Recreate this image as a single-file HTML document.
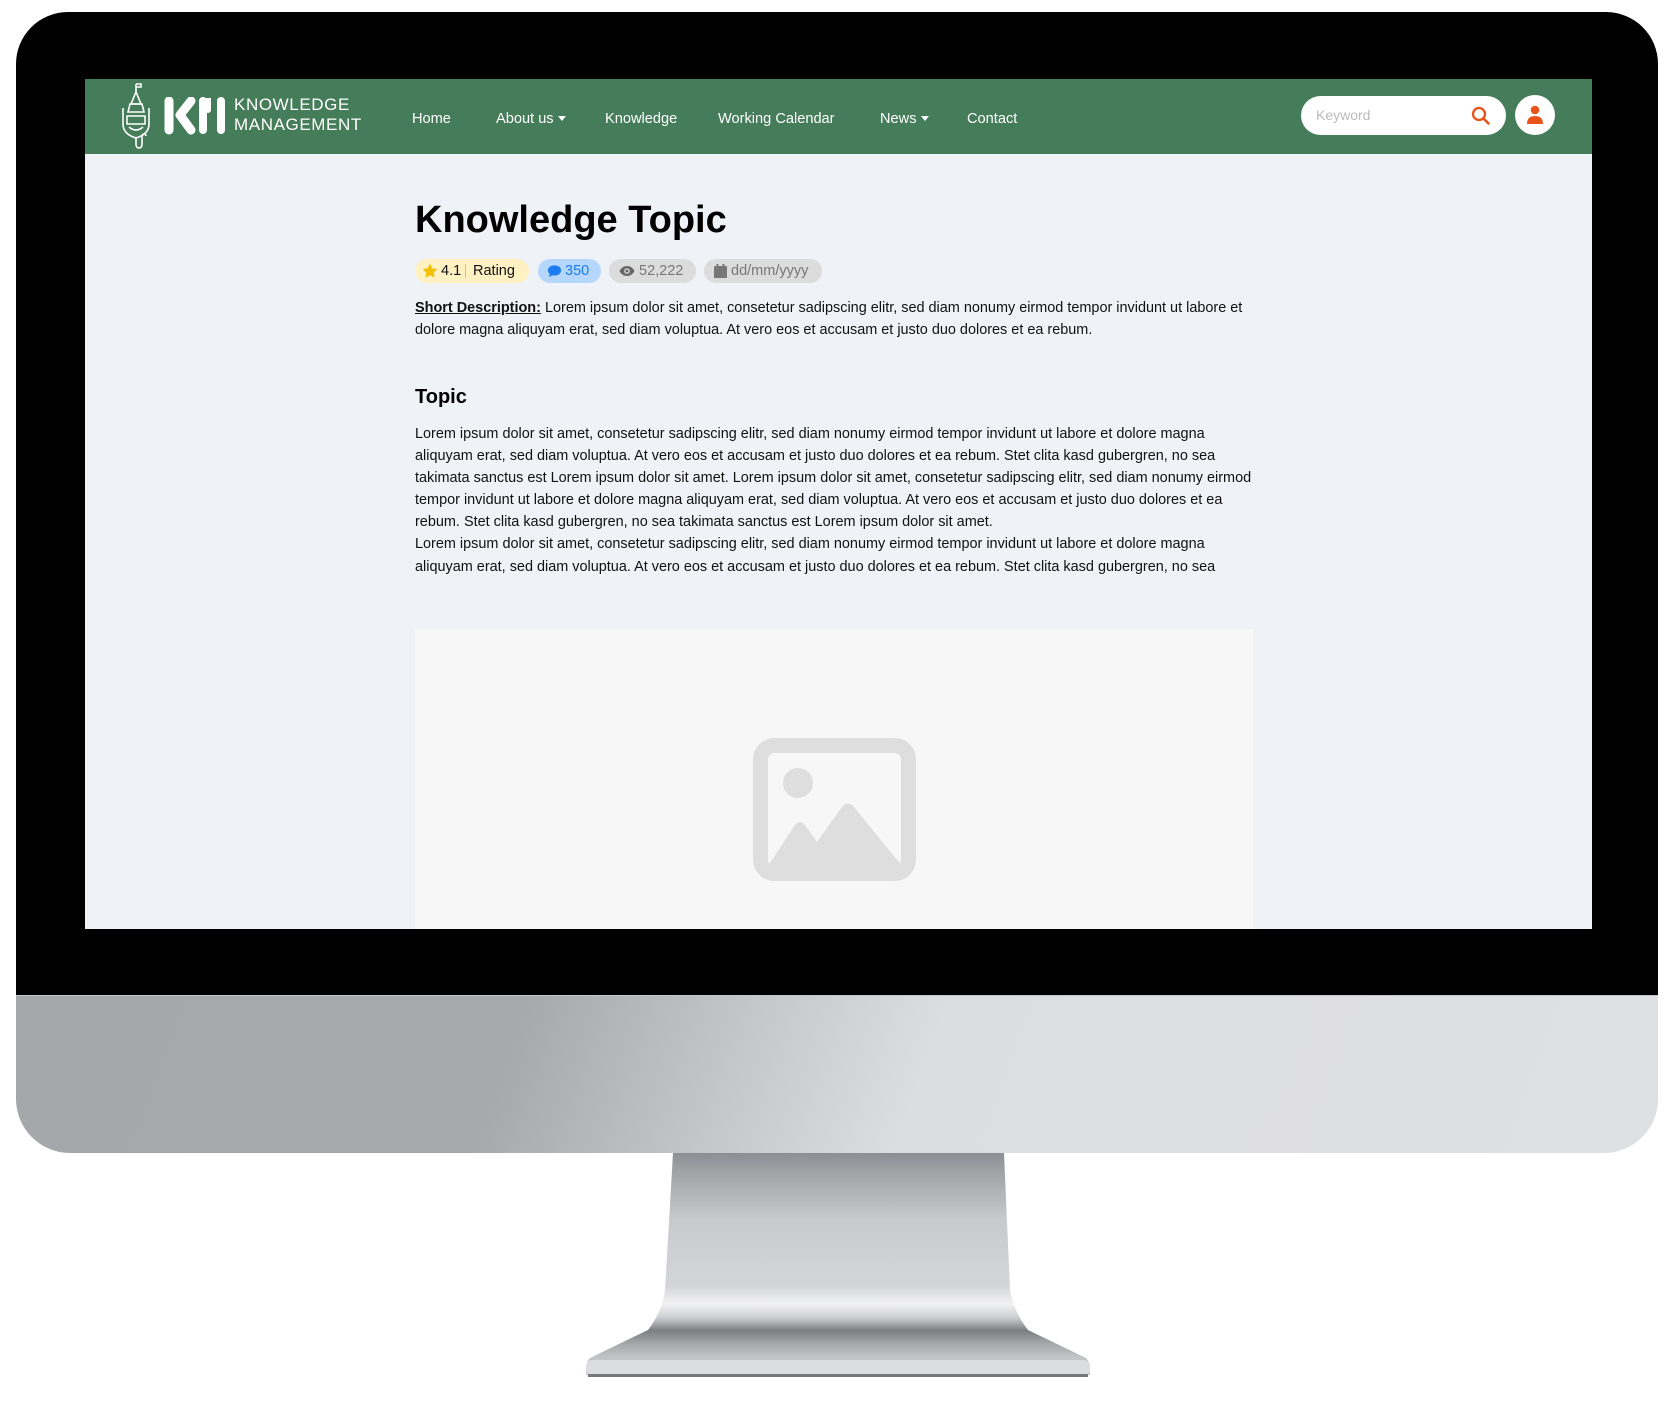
<!DOCTYPE html>
<html><head><meta charset="utf-8"><style>
*{margin:0;padding:0;box-sizing:border-box}
html,body{width:1670px;height:1402px;background:#fff;overflow:hidden;font-family:"Liberation Sans",Arial,sans-serif}
.abs{position:absolute}
#bezel{left:16px;top:12px;width:1642px;height:983px;background:#000;border-radius:52px 52px 0 0}
#chin{left:16px;top:995px;width:1642px;height:158px;border-radius:0 0 54px 54px;
background:linear-gradient(110deg,#a6a7ab 0%,#a7a8ac 30%,#c8c9cd 45%,#dcdde0 55%,#dfe0e2 100%);border-top:1px solid #c8c8cc}
#screen{left:85px;top:79px;width:1507px;height:850px;background:#eff2f7;overflow:hidden}
#nav{left:0;top:0;width:1507px;height:75px;background:#457c59}
.ni{position:absolute;top:31px;color:#fff;font-size:14.6px;white-space:nowrap;line-height:18px}
.car{display:inline-block;width:0;height:0;border-left:4px solid transparent;border-right:4px solid transparent;border-top:5px solid #fff;margin-left:4px;vertical-align:2px}
#search{left:1216px;top:17px;width:205px;height:39px;background:#fff;border-radius:20px}
#user{left:1430px;top:16px;width:40px;height:40px;background:#fff;border-radius:50%}
.t{position:absolute;white-space:nowrap;color:#111}
.badge{position:absolute;top:180px;height:24px;border-radius:12px;font-size:14.5px;line-height:24px;white-space:nowrap}
.p{font-size:14.45px;line-height:22.1px;left:330px}
</style></head><body>
<div id="bezel" class="abs"></div>
<div id="chin" class="abs"></div>
<svg class="abs" style="left:0;top:0" width="1670" height="1402">
<defs>
<linearGradient id="st" x1="0" y1="0" x2="0" y2="1">
<stop offset="0" stop-color="#8d8e93"/><stop offset="0.08" stop-color="#a0a1a5"/><stop offset="0.3" stop-color="#c9cacd"/><stop offset="0.6" stop-color="#d4d5d8"/><stop offset="0.68" stop-color="#f2f2f3"/><stop offset="0.74" stop-color="#cfd0d3"/><stop offset="0.8" stop-color="#7c7d80"/><stop offset="0.86" stop-color="#a7a8ab"/><stop offset="0.92" stop-color="#c2c3c6"/><stop offset="1" stop-color="#c9cacd"/>
</linearGradient>
</defs>
<path d="M673 1153 L1004 1153 L1010 1290 Q1014 1312 1028 1330 L1086 1358 Q1090 1362 1090 1370 L1090 1375 L586 1375 L586 1370 Q586 1362 590 1358 L648 1330 Q662 1312 665 1290 Z" fill="url(#st)"/>
<rect x="586" y="1360" width="504" height="15" rx="6" fill="#dcdde0"/>
<rect x="588" y="1374" width="500" height="3" fill="#77787b"/>
</svg>
<div id="screen" class="abs">
 <div id="nav" class="abs">
  <svg class="abs" style="left:35px;top:3px" width="40" height="68" viewBox="0 0 40 68" fill="none" stroke="#fff" stroke-width="1.6">
   <path d="M16 2v8M16 2h5v3h-5"/><path d="M16 10l-5 12h10z"/><path d="M10 22h12l2 8H8z"/><path d="M3 26v16q0 10 13 14q13-4 13-14V26"/><path d="M7 34h18v8H7z"/><path d="M9 45q7 6 14 0"/><path d="M16 56v6q0 4 3 4t3-4v-8a2 2 0 1 1 4 0"/>
  </svg>
  <svg class="abs" style="left:79px;top:18px" width="66" height="38" viewBox="0 0 66 38" stroke="#fff" stroke-linecap="round" fill="none">
   <path d="M5 4v29" stroke-width="9"/><path d="M27 4L16 18L27 33" stroke-width="9" stroke-linejoin="round"/><path d="M39 4v29" stroke-width="8"/><path d="M39 4h5v9" stroke-width="6"/><path d="M57 4v29" stroke-width="8"/>
  </svg>
  <div class="ni" style="left:149px;top:16px;font-size:17px;letter-spacing:0.6px;line-height:20px">KNOWLEDGE<br>MANAGEMENT</div>
  <div class="ni" style="left:327px">Home</div>
  <div class="ni" style="left:411px">About us<span class="car"></span></div>
  <div class="ni" style="left:520px">Knowledge</div>
  <div class="ni" style="left:633px">Working Calendar</div>
  <div class="ni" style="left:795px">News<span class="car"></span></div>
  <div class="ni" style="left:882px">Contact</div>
  <div id="search" class="abs">
   <div class="t" style="left:15px;top:11px;font-size:14px;color:#bbb">Keyword</div>
   <svg class="abs" style="left:170px;top:10px" width="20" height="20" viewBox="0 0 20 20"><circle cx="8" cy="8" r="6" fill="none" stroke="#e8541a" stroke-width="2.3"/><path d="M12.5 12.5l5 5" stroke="#e8541a" stroke-width="2.6" stroke-linecap="round"/></svg>
  </div>
  <div id="user" class="abs">
   <svg class="abs" style="left:12px;top:10px" width="16" height="20" viewBox="0 0 16 20"><circle cx="8" cy="5" r="4.3" fill="#e8541a"/><path d="M0 19q0-8 8-8t8 8z" fill="#e8541a"/></svg>
  </div>
 </div>
 <div class="t" style="left:330px;top:120px;font-size:38px;font-weight:bold;color:#000">Knowledge Topic</div>
 <div class="badge" style="left:330px;width:114px;background:#fff1c2;color:#111">
  <svg class="abs" style="left:7px;top:4px" width="16" height="16" viewBox="0 0 24 24"><path d="M12 1l3.4 7 7.6 1-5.5 5.3 1.3 7.6L12 18.3 5.2 22l1.3-7.6L1 9l7.6-1z" fill="#f5c000"/></svg>
  <span class="abs" style="left:26px">4.1</span><span class="abs" style="left:50px;top:5px;width:1px;height:14px;background:#f0c040"></span><span class="abs" style="left:58px">Rating</span></div>
 <div class="badge" style="left:453px;width:63px;background:#b5d7fd;color:#1a7cf0">
  <svg class="abs" style="left:9px;top:5px" width="15" height="14" viewBox="0 0 16 14"><path d="M8 1C3.6 1 1 3.5 1 6.3c0 1.6.8 2.9 2 3.8L2 13.5l3.6-2c.8.2 1.600.3 2.4.3 4.4 0 7-2.500 7-5.500S12.4 1 8 1z" fill="#1a7cf0"/></svg>
  <span class="abs" style="left:27px">350</span></div>
 <div class="badge" style="left:524px;width:87px;background:#dcdcdc;color:#777">
  <svg class="abs" style="left:10px;top:6px" width="16" height="12" viewBox="0 0 16 12"><path d="M8 1C4 1 1.5 4 .5 6c1 2 3.5 5 7.5 5s6.5-3 7.5-5C14.5 4 12 1 8 1z" fill="#666"/><circle cx="8" cy="6" r="2.8" fill="#dcdcdc"/><circle cx="8" cy="6" r="1.5" fill="#666"/></svg>
  <span class="abs" style="left:30px">52,222</span></div>
 <div class="badge" style="left:619px;width:118px;background:#dcdcdc;color:#777">
  <svg class="abs" style="left:10px;top:5px" width="13" height="14" viewBox="0 0 13 14"><rect x="0" y="2" width="13" height="12" rx="1" fill="#777"/><rect x="2.5" y="0" width="2" height="3" fill="#777"/><rect x="8.5" y="0" width="2" height="3" fill="#777"/></svg>
  <span class="abs" style="left:27px">dd/mm/yyyy</span></div>
 <div class="t p" style="top:218px"><b style="text-decoration:underline">Short Description:</b> Lorem ipsum dolor sit amet, consetetur sadipscing elitr, sed diam nonumy eirmod tempor invidunt ut labore et<br>dolore magna aliquyam erat, sed diam voluptua. At vero eos et accusam et justo duo dolores et ea rebum.</div>
 <div class="t" style="left:330px;top:307px;font-size:20px;font-weight:bold;color:#000">Topic</div>
 <div class="t p" style="top:344px">Lorem ipsum dolor sit amet, consetetur sadipscing elitr, sed diam nonumy eirmod tempor invidunt ut labore et dolore magna<br>aliquyam erat, sed diam voluptua. At vero eos et accusam et justo duo dolores et ea rebum. Stet clita kasd gubergren, no sea<br>takimata sanctus est Lorem ipsum dolor sit amet. Lorem ipsum dolor sit amet, consetetur sadipscing elitr, sed diam nonumy eirmod<br>tempor invidunt ut labore et dolore magna aliquyam erat, sed diam voluptua. At vero eos et accusam et justo duo dolores et ea<br>rebum. Stet clita kasd gubergren, no sea takimata sanctus est Lorem ipsum dolor sit amet.<br>Lorem ipsum dolor sit amet, consetetur sadipscing elitr, sed diam nonumy eirmod tempor invidunt ut labore et dolore magna<br>aliquyam erat, sed diam voluptua. At vero eos et accusam et justo duo dolores et ea rebum. Stet clita kasd gubergren, no sea</div>
 <div class="abs" style="left:330px;top:550px;width:838px;height:320px;background:#f7f7f7"></div>
 <svg class="abs" style="left:668px;top:659px" width="163" height="143" viewBox="0 0 163 143">
  <rect x="7.5" y="7.5" width="148" height="128" rx="14" fill="none" stroke="#dedede" stroke-width="15"/>
  <circle cx="45" cy="45" r="15" fill="#dedede"/>
  <path d="M15 128 L42 87 Q47 81 52 87 L64 104 L89 69 Q95 62 101 69 L149 128 Z" fill="#dedede"/>
 </svg>
</div>
</body></html>
